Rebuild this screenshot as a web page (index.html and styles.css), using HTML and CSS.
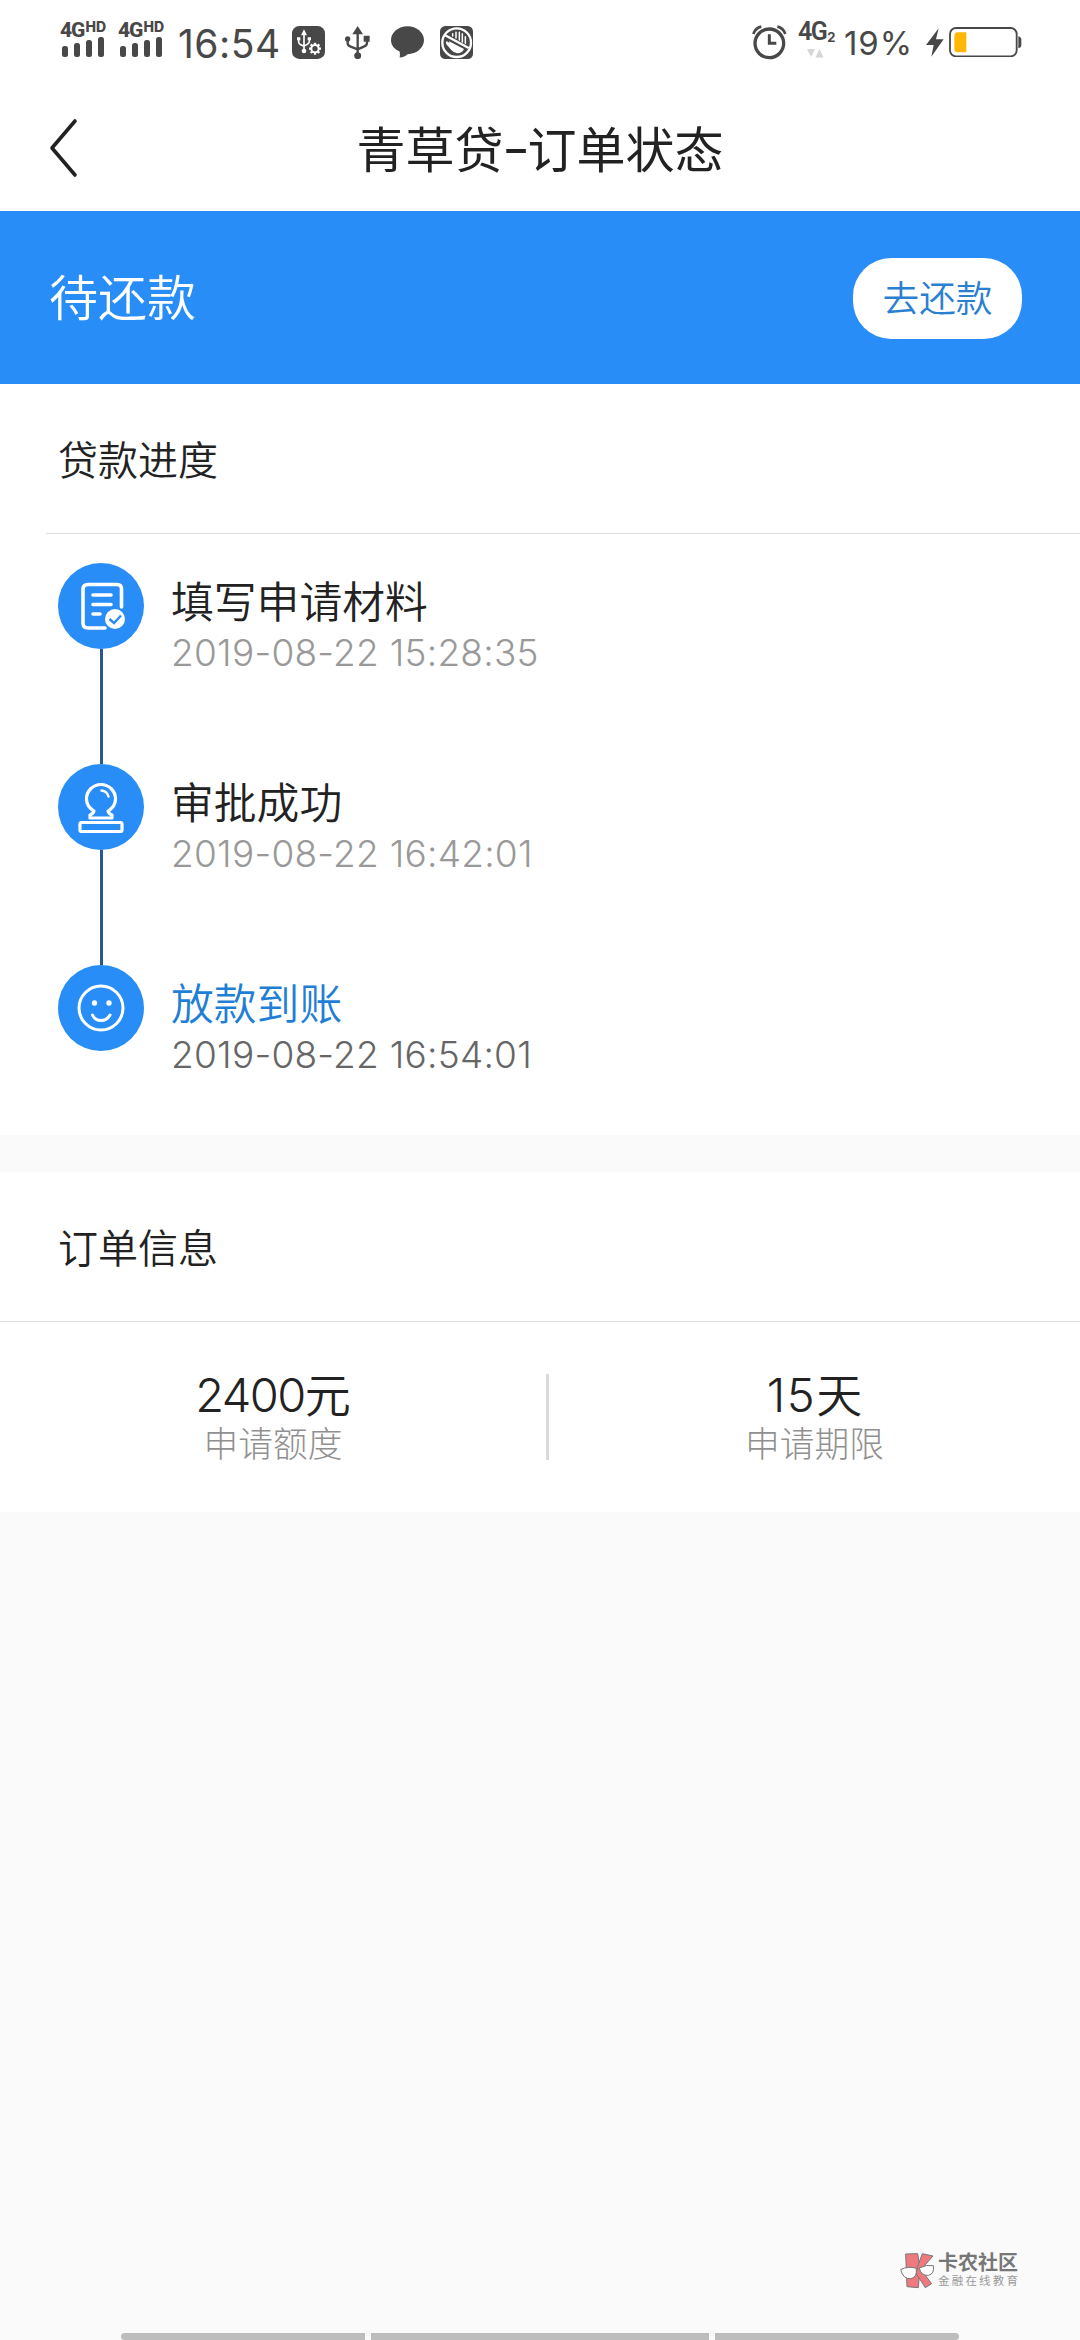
FILE: index.html
```html
<!DOCTYPE html>
<html lang="zh-CN">
<head>
<meta charset="utf-8">
<title>青草贷-订单状态</title>
<link rel="stylesheet" href="styles.css">
</head>
<body>
<div class="screen">
  <div class="status">
    <div class="signal">
      <div class="net"><b>4G</b><i>HD</i></div>
      <svg width="42" height="20" viewBox="0 0 42 20"><g fill="#484848"><rect x="0" y="9" width="6" height="11" rx="2.5"/><rect x="12" y="6" width="6" height="14" rx="2.5"/><rect x="24" y="3" width="6" height="17" rx="2.5"/><rect x="36" y="0" width="6" height="20" rx="2.5"/></g></svg>
    </div>
    <div class="signal">
      <div class="net"><b>4G</b><i>HD</i></div>
      <svg width="42" height="20" viewBox="0 0 42 20"><g fill="#484848"><rect x="0" y="9" width="6" height="11" rx="2.5"/><rect x="12" y="6" width="6" height="14" rx="2.5"/><rect x="24" y="3" width="6" height="17" rx="2.5"/><rect x="36" y="0" width="6" height="20" rx="2.5"/></g></svg>
    </div>
    <div class="clock">16:54</div>
    <svg class="ic-debug" width="33" height="33" viewBox="36 78 99 99"><rect x="36" y="78" width="99" height="99" rx="22" fill="#484848"/><g fill="none" stroke="#fff" stroke-width="5"><path d="M72 100V152M56 118V126Q56 134 72 138M88 116V124Q88 132 72 138"/><circle cx="105" cy="146" r="11" stroke-width="6"/><path stroke-width="7" d="M105 135V128M105 157V164M94 146H87M116 146H123M97 138L92 133M113 154L118 159M113 138L118 133M97 154L92 159"/></g><path fill="#fff" d="M72 88L63 106H81ZM51 112H61V121H51ZM83 112H93V121H83Z"/><circle cx="72" cy="153" r="7" fill="#fff"/></svg>
    <svg class="ic-usb" width="25" height="33" viewBox="196 78 75 99"><path fill="#484848" d="M234 78L218 103H250ZM252 107H270V125H252Z"/><circle cx="204" cy="117" r="8" fill="#484848"/><circle cx="234" cy="167" r="10.5" fill="#484848"/><path fill="none" stroke="#484848" stroke-width="7" d="M234 95V165M204 118V130Q204 137 213 140L234 148M262 118V128Q262 136 254 139L234 148"/></svg>
    <svg class="ic-chat" width="33" height="32" viewBox="332 78 100 96"><path fill="#484848" d="M382 78C410 78 432 97 432 120S410 163 382 163Q374 172 358 173Q360 165 358 155C342 148 332 136 332 120C332 97 354 78 382 78Z"/></svg>
    <svg class="ic-hand" width="33" height="33" viewBox="480 78 99 99"><rect x="480" y="78" width="99" height="99" rx="16" fill="#484848"/><path fill="#fff" d="M507 124L552 147Q546 160 532 160Q522 160 514 150L499 133Q496 126 500 124Q504 124 508 130Z"/><path fill="none" stroke="#fff" stroke-width="4.500" stroke-linecap="round" d="M518 101V108M528 97V114M538 97V120M547 101V126M556 110V130"/><circle cx="530" cy="128" r="43" fill="none" stroke="#fff" stroke-width="7"/><path d="M494 105L566 144" stroke="#fff" stroke-width="7"/></svg>
    <svg class="ic-alarm" width="35" height="35" viewBox="65 74 105 105"><g fill="none" stroke="#484848"><circle cx="117" cy="129" r="43" stroke-width="10"/><path d="M117 102V129H138" stroke-width="9"/><path d="M69 101Q75 83 93 79M165 101Q159 83 141 79" stroke-width="8"/></g></svg>
    <div class="data"><div class="data-name"><b>4G</b><i>2</i></div><svg width="17" height="9" viewBox="0 0 17 9"><path fill="#d6d6d6" d="M0 0H8L4 8ZM8.500 8.500H16.500L12.500 0Z"/></svg></div>
    <div class="percent">19%</div>
    <svg class="ic-bolt" width="18" height="29" viewBox="583 83 54 87"><path fill="#484848" d="M621 84L583 134H606L599 169L636 117H613Z"/></svg>
    <svg class="ic-battery" width="73" height="30" viewBox="653 80 219 90"><path fill="#484848" d="M861 108Q870 110 870 118V134Q870 142 861 144Z"/><rect x="656" y="83" width="200" height="85" rx="18" fill="#fff" stroke="#484848" stroke-width="5.500"/><path fill="#ffb703" d="M680 96H705V156H680Q669 156 669 145V107Q669 96 680 96Z"/></svg>
  </div>

  <div class="header">
    <svg class="back" width="30" height="60" viewBox="0 0 30 60"><path d="M27 3L4 30L27 57" fill="none" stroke="#222" stroke-width="3.600" stroke-linecap="round" stroke-linejoin="round"/></svg>
    <h1>青草贷<span class="dash">-</span>订单状态</h1>
  </div>

  <div class="banner">
    <span class="banner-text">待还款</span>
    <button class="pay">去还款</button>
  </div>

  <div class="section-title">贷款进度</div>
  <div class="rule inset"></div>
  <div class="timeline">
    <div class="step">
      <div class="marker">
        <svg width="86" height="86" viewBox="0 0 86 86"><circle cx="43" cy="43" r="43" fill="#298df8"/><g fill="none" stroke="#fff" stroke-width="3.600" stroke-linecap="round"><path d="M63.500 44V26Q63.500 21.500 59 21.500H30Q25 21.500 25 26.500V60Q25 65 30 65H47"/><path d="M35 32H53M35 41.500H53M35 51H42"/></g><circle cx="57" cy="56" r="10" fill="#fff"/><path d="M51.500 56L56 60L63 52.500" fill="none" stroke="#298df8" stroke-width="2.400"/></svg>
        <div class="link"></div>
      </div>
      <div class="step-text"><div class="step-name">填写申请材料</div><div class="date">2019-08-22 15:28:35</div></div>
    </div>
    <div class="step">
      <div class="marker">
        <svg width="86" height="86" viewBox="0 0 86 86"><circle cx="43" cy="43" r="43" fill="#298df8"/><g fill="none" stroke="#fff" stroke-width="3.200" stroke-linejoin="round" stroke-linecap="round"><path d="M36 47C31 44 28.500 40 28.500 35A14.500 14.500 0 0 1 57.500 35C57.500 40 55 44 50 47Q51 50 54 51V54H32V51Q35 50 36 47Z"/><rect x="22" y="58.500" width="42" height="9" rx="1.500"/><path d="M43.500 26.500Q49 27 50.500 32.500" stroke-width="2.400"/></g></svg>
        <div class="link"></div>
      </div>
      <div class="step-text"><div class="step-name">审批成功</div><div class="date">2019-08-22 16:42:01</div></div>
    </div>
    <div class="step last">
      <div class="marker">
        <svg width="86" height="86" viewBox="0 0 86 86"><circle cx="43" cy="43" r="43" fill="#298df8"/><circle cx="43" cy="43" r="22" fill="none" stroke="#fff" stroke-width="3"/><circle cx="36.500" cy="38" r="2.700" fill="#fff"/><circle cx="51" cy="38" r="2.700" fill="#fff"/><path d="M34.500 50Q37 55.500 43 55.500T52 50" fill="none" stroke="#fff" stroke-width="3" stroke-linecap="round"/></svg>
      </div>
      <div class="step-text"><div class="step-name active">放款到账</div><div class="date dark">2019-08-22 16:54:01</div></div>
    </div>
  </div>

  <div class="gap"></div>

  <div class="section-title order">订单信息</div>
  <div class="rule"></div>
  <div class="stats">
    <div class="stat"><div class="value"><span class="amount">2400</span>元</div><div class="label">申请额度</div></div>
    <div class="divider"></div>
    <div class="stat"><div class="value"><span class="days">15</span>天</div><div class="label">申请期限</div></div>
  </div>

  <div class="rest">
    <div class="brand">
      <svg width="35" height="36" viewBox="59 68 105 108"><g fill="#ee7a80" stroke="#777" stroke-width="3"><path d="M76 71L112 70L119 112L114 172L80 169Z"/><path d="M126 70L158 77L122 118L154 160L135 172L108 130L112 108Z"/></g><path d="M61 118Q82 106 108 114Q111 140 92 145Q68 147 61 118ZM117 113Q138 102 159 106Q163 130 145 135Q122 137 117 113Z" fill="#fff" stroke="#777" stroke-width="3"/></svg>
      <div class="brand-text"><div class="brand-name">卡农社区</div><div class="brand-sub">金融在线教育</div></div>
    </div>
    <div class="navbar"><span class="side left"></span><span class="mid"></span><span class="side right"></span></div>
  </div>
</div>
</body>
</html>
```
FILE: styles.css
```css
* { box-sizing: border-box; margin: 0; padding: 0; }
body { background: #fff; }
svg { display: block; flex: none; }
.screen {
  width: 1080px; height: 2340px; overflow: hidden;
  display: flex; flex-direction: column;
  background: #fff; color: #222;
  font-family: Inter, "Noto Sans CJK SC", sans-serif;
  font-weight: 350;
}

.status { height: 90px; padding-left: 60px; display: flex; align-items: flex-start; color: #484848; white-space: nowrap; }
.signal { width: 58px; padding-top: 20px; }
.signal svg { margin-left: 2px; }
.net { height: 17px; display: flex; align-items: flex-start; }
.net b { font: 800 21px/20px "Roboto", sans-serif; letter-spacing: -1px; }
.net i { font: 800 14px/14px "Inter", sans-serif; margin-left: 1px; }
.clock { margin-left: 2px; width: 114px; font-size: 39px; font-weight: 400; line-height: 88px; letter-spacing: 0.500px; }
.ic-debug { margin: 26px 0 0 0; }
.ic-usb { margin: 26px 0 0 20px; }
.ic-chat { margin: 26px 0 0 21px; }
.ic-hand { margin: 26px 0 0 16px; }
.ic-alarm { margin: 25px 0 0 279px; }
.data { width: 34px; margin: 22px 0 0 11px; }
.data-name { display: flex; align-items: flex-end; height: 23px; }
.data-name b { font: 600 25px/26px "Roboto", sans-serif; letter-spacing: -1.500px; }
.data-name i { font: 700 13px/16px Inter, sans-serif; margin-left: 1px; }
.data svg { margin: 4px 0 0 9px; }
.percent { margin-left: 12px; width: 82px; font-size: 33px; font-weight: 400; line-height: 87px; letter-spacing: 0.900px; }
.ic-bolt { margin: 28px 0 0 0; }
.ic-battery { margin: 27px 0 0 5px; }

.header { height: 121px; display: grid; grid-template-columns: 78px 1fr 78px; align-items: center; }
.back { margin-left: 48px; margin-top: -6px; }
.header h1 { text-align: center; font-size: 49px; font-weight: 400; line-height: 60px; }
.dash { display: inline-block; width: 24px; transform: translateY(-2px) scaleX(1.250); }

.banner { height: 173px; background: #298df8; display: flex; justify-content: space-between; align-items: center; padding: 2px 58px 0 49px; }
.banner-text { color: #fff; font-size: 49px; line-height: 60px; }
.pay { width: 169px; height: 81px; border: 0; border-radius: 38px; background: #fff; color: #2b7fd0; font: inherit; font-size: 36.700px; line-height: 81px; }

.section-title { height: 149px; padding: 5px 0 0 58px; font-size: 40px; line-height: 143px; }
.rule { height: 1px; background: #dedede; }
.rule.inset { margin-left: 46px; }

.timeline { height: 601px; padding: 29px 0 0 58px; }
.step { height: 201px; display: flex; }
.step.last { height: 170px; }
.marker { width: 86px; display: flex; flex-direction: column; align-items: center; }
.link { flex: 1; width: 3px; background: #29588f; }
.step-text { padding: 15px 0 0 27px; }
.step-name { font-size: 42.800px; line-height: 50px; }
.step-name.active { color: #1f7fd6; }
.date { font-size: 37px; font-weight: 300; line-height: 50px; letter-spacing: 0.250px; color: #999; white-space: nowrap; }
.date.dark { color: #666; }

.gap { height: 37px; background: #fafafa; }

.stats { height: 190px; display: grid; grid-template-columns: 546px 3px 531px; }
.stat { padding-top: 48px; text-align: center; }
.value { font-size: 46px; line-height: 50px; }
.amount { font-size: 47px; letter-spacing: -1.600px; }
.days { font-size: 47px; letter-spacing: 1.500px; }
.label { font-size: 34.700px; font-weight: 300; line-height: 48px; color: #909090; }
.divider { height: 86px; background: #dadada; align-self: center; }

.rest { flex: 1; background: #fafafa; display: flex; flex-direction: column; justify-content: space-between; }
.brand { margin: 741px 0 0 900px; display: flex; }
.brand-text { margin-left: 3px; white-space: nowrap; color: #777; }
.brand-name { font-size: 20px; line-height: 21px; font-weight: 700; }
.brand-sub { font-size: 11.500px; line-height: 14px; letter-spacing: 2.200px; color: #999; font-weight: 400; }
.navbar { height: 7px; display: flex; justify-content: center; gap: 6px; }
.navbar span { background: #bdbdbd; height: 7px; }
.side { width: 244px; }
.mid { width: 338px; }
.left { border-radius: 4px 0 0 4px; }
.right { border-radius: 0 4px 4px 0; }
```
